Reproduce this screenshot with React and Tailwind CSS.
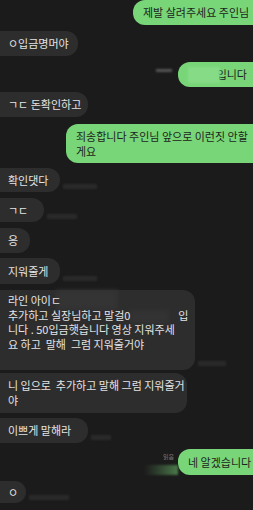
import React from "react";

const font = "font-['Noto_Sans_CJK_KR','Noto_Sans',sans-serif]";

// Faint smudged timestamp next to a bubble
function Stamp({ w = 34, mb = 3 }) {
    return <div className="ml-[3px] h-[5px] bg-[#2a2a2a] blur-[1px]" style={{ width: w, marginBottom: mb }} />;
}

function Left({ children, h = 25, mt, stamp, w }) {
    return (
        <div className="flex items-end" style={{ marginTop: mt }}>
            <div
                className="bg-[#2d2d2d] text-[#e4e4e4] rounded-r-[12px] pl-[8px] pr-[10px] flex flex-col justify-center leading-[15px] whitespace-pre shrink-0"
                style={{ height: h, width: w }}
            >
                {children}
            </div>
            {stamp ? <Stamp w={stamp} /> : null}
        </div>
    );
}

function Right({ children, h = 25, mt, w, before }) {
    return (
        <div className="flex items-end justify-end" style={{ marginTop: mt }}>
            {before}
            <div
                className="bg-[#78d678] text-[#1c241c] rounded-l-[12px] pl-[10px] pr-[6px] flex flex-col justify-center leading-[15px] whitespace-pre shrink-0 overflow-hidden"
                style={{ height: h, width: w }}
            >
                {children}
            </div>
        </div>
    );
}

export default function App() {
    return (
        <div className={`w-[253px] h-[510px] bg-[#1b1b1b] overflow-hidden flex flex-col text-[11px] ${font}`}>
            <Right mt={0} w={120}>
                <span className="text-center">제발 살려주세요 주인님</span>
            </Right>

            <Left mt={6} w={78}>ㅇ입금명머야</Left>

            <Right mt={6} w={75} before={<div className="mr-[6px] mb-[15px] w-[16px] h-[3px] bg-[#555] blur-[1px]" />}>
                <div className="flex items-center justify-end">
                    <div className="w-[32px] h-[16px] bg-[#86dc86] blur-[1px] -mr-[3px]" />
                    <span>입니다</span>
                </div>
            </Right>

            <Left mt={5} w={88}>ㄱㄷ 돈확인하고</Left>

            <Right mt={7} h={39} w={187}>
                {"죄송합니다 주인님 앞으로 이런짓 안할\n게요"}
            </Right>

            <Left mt={5} h={24} w={60} stamp={34}>확인댓다</Left>
            <Left mt={6} h={24} w={44} stamp={30}>ㄱㄷ</Left>
            <Left mt={6} h={25} w={30}>응</Left>
            <Left mt={5} h={26} w={60} stamp={34}>지워줄게</Left>

            <div className="flex items-end mt-[6px]">
                <div className="relative bg-[#2d2d2d] text-[#e4e4e4] rounded-r-[12px] pl-[8px] pt-[3px] w-[195px] h-[80px] leading-[14.5px] whitespace-pre shrink-0">
                    <div className="absolute left-[56px] top-0 w-[62px] h-[20px] bg-[#343434] blur-[2px]" />
                    <div className="absolute left-[129px] top-[20px] w-[40px] h-[14px] bg-[#333] blur-[2px]" />
                    <div className="relative">
                        <div>라인 아이ㄷ</div>
                        <div className="flex">
                            <span>추가하고 실장님하고 말걸0</span>
                            <span className="w-[48px]" />
                            <span>입</span>
                        </div>
                        <div>니다 . 50입금햇습니다 영상 지워주세</div>
                        <div>요 하고  말해  그럼 지워줄거야</div>
                    </div>
                </div>
                <Stamp w={28} mb={4} />
            </div>

            <Left mt={3} h={40} w={187}>
                {"니 입으로  추가하고 말해 그럼 지워줄거\n야"}
            </Left>

            <Left mt={5} w={88} stamp={20}>이쁘게 말해라</Left>

            <Right
                mt={6}
                h={26}
                w={75}
                before={
                    <div className="flex flex-col items-end">
                        <span className="text-[6px] leading-[8px] text-[#777] mr-[4px] mb-[4px]">읽음</span>
                        <div className="w-[34px] h-[10px] bg-gradient-to-r from-[#1b1b1b] to-[#4a7a4a] blur-[1px]" />
                    </div>
                }
            >
                <span className="text-center">네 알겠습니다</span>
            </Right>

            <Left mt={6} h={22} w={26} stamp={40}>ㅇ</Left>
        </div>
    );
}
